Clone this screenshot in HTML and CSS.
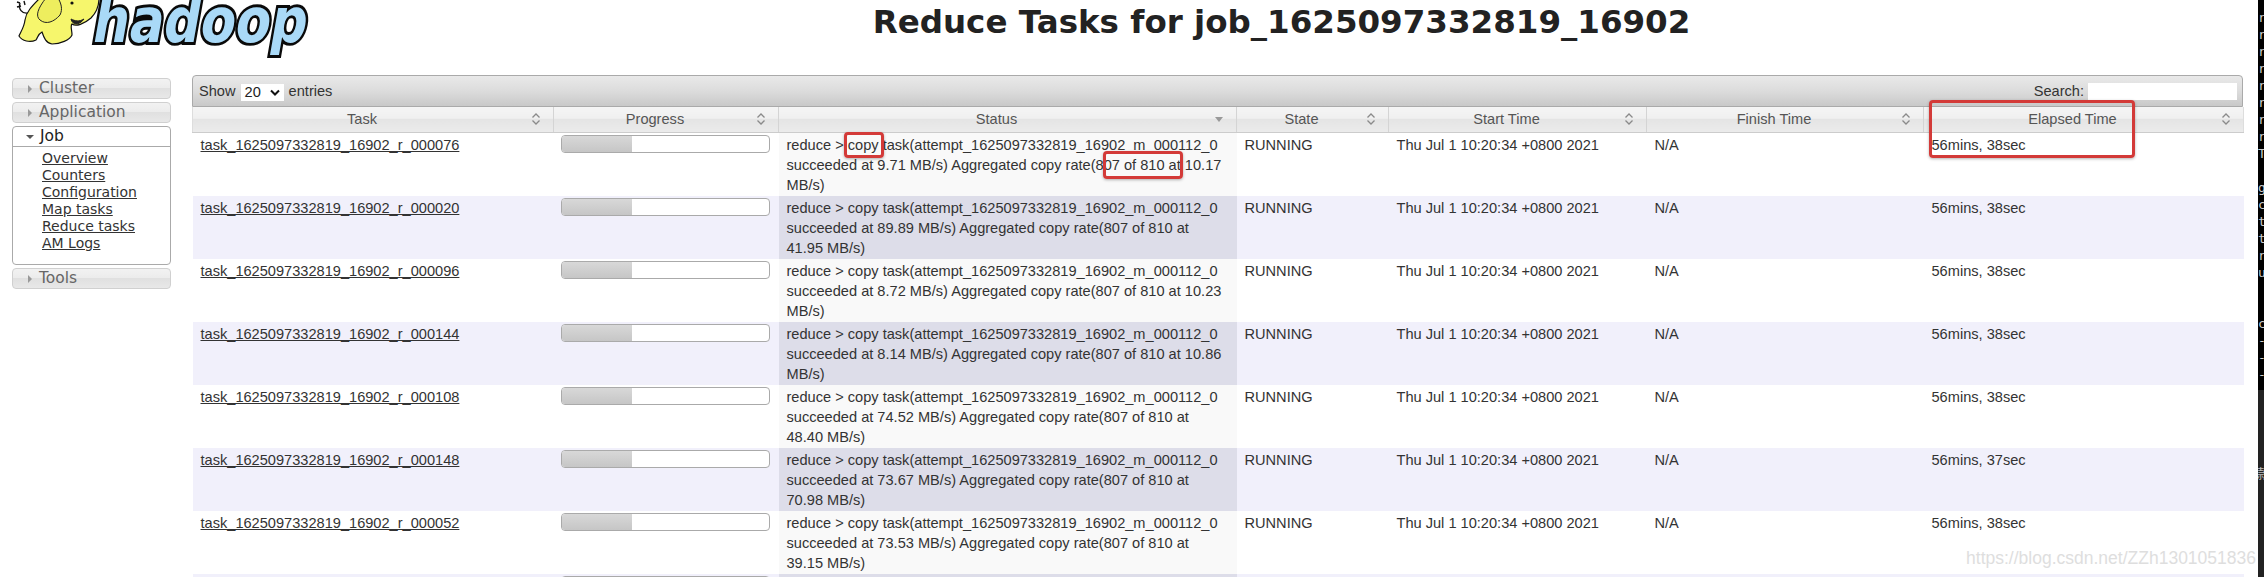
FILE: index.html
```html
<!DOCTYPE html>
<html lang="en">
<head>
<meta charset="utf-8">
<title>Reduce Tasks for job_1625097332819_16902</title>
<link rel="stylesheet" href="styles.css">
</head>
<body>
<svg class="sprites" width="0" height="0" aria-hidden="true">
  <symbol id="sort" viewBox="0 0 10 14"><path d="M1.5 5.5 5 2l3.500 3.500M1.500 8.500 5 12l3.500-3.500" fill="none" stroke="#8a8a8a" stroke-width="1.300"/></symbol>
  <symbol id="sort-desc" viewBox="0 0 10 14"><path d="M1 5h8L5 10z" fill="#999"/></symbol>
</svg>
<div class="page">
  <header class="top">
    <svg class="logo" width="320" height="60" viewBox="0 0 320 60" role="img" aria-label="hadoop logo">
      <path class="trail" d="M28 13C22 14 18 9 20 3M20 3l-3-1M21 6l-4 1M24 1l1 4"/>
      <path class="hide" d="M40-2C32 6 26 12 25 20 24 28 20 33 19 36 22 41 30 43 36 40 38 37 38 34 42 32 44 38 46 43 52 44 60 44 70 40 72 35 72 30 70 26 72 24 76 27 84 24 91 18 97 12 99 6 99-2Z"/>
      <path class="ear" d="M46-2C38 8 35 16 40 20 46 25 54 22 60 15 63 9 61 3 58-2"/>
      <path class="mouth" d="M71 19C72 25 79 26 84 19 79 22 75 21 71 19Z"/>
      <circle class="eye" cx="72" cy="3" r="1.600"/>
      <text class="word" x="90" y="42" textLength="214" lengthAdjust="spacingAndGlyphs" transform="skewX(-10) translate(8 0)">hadoop</text>
    </svg>
    <h1 class="title">Reduce Tasks for job_1625097332819_16902</h1>
  </header>
  <main class="main">
    <nav class="side">
      <div class="acc"><i class="tri"></i>Cluster</div>
      <div class="acc"><i class="tri"></i>Application</div>
      <div class="acc-open">
        <div class="acc-head"><i class="tri-down"></i>Job</div>
        <ul class="links">
          <li><a href="#">Overview</a></li>
          <li><a href="#">Counters</a></li>
          <li><a href="#">Configuration</a></li>
          <li><a href="#">Map tasks</a></li>
          <li><a href="#">Reduce tasks</a></li>
          <li><a href="#">AM Logs</a></li>
        </ul>
      </div>
      <div class="acc"><i class="tri"></i>Tools</div>
    </nav>
    <section class="wrap">
      <div class="toolbar">
        <div class="length">Show <span class="select">20<svg width="10" height="7" viewBox="0 0 10 7"><path d="M1 1.500 5 5.500 9 1.500" fill="none" stroke="#111" stroke-width="2"/></svg></span> entries</div>
        <div class="search">Search:<span class="input"></span></div>
      </div>
      <table class="grid">
        <colgroup>
          <col class="c1"><col class="c2"><col class="c3"><col class="c4"><col class="c5"><col class="c6"><col class="c7">
        </colgroup>
        <thead>
          <tr>
            <th><div class="th"><span>Task</span><svg><use href="#sort"/></svg></div></th>
            <th><div class="th"><span>Progress</span><svg><use href="#sort"/></svg></div></th>
            <th><div class="th"><span>Status</span><svg><use href="#sort-desc"/></svg></div></th>
            <th><div class="th"><span>State</span><svg><use href="#sort"/></svg></div></th>
            <th><div class="th"><span>Start Time</span><svg><use href="#sort"/></svg></div></th>
            <th><div class="th"><span>Finish Time</span><svg><use href="#sort"/></svg></div></th>
            <th><div class="th"><span>Elapsed Time</span><svg><use href="#sort"/></svg></div></th>
          </tr>
        </thead>
        <tbody>
          <tr>
            <td><a href="#">task_1625097332819_16902_r_000076</a></td>
            <td class="pc"><div class="bar"><div class="fill"></div></div></td>
            <td class="st">reduce &gt; copy task(attempt_1625097332819_16902_m_000112_0 succeeded at 9.71 MB/s) Aggregated copy rate(807 of 810 at 10.17 MB/s)</td>
            <td>RUNNING</td><td>Thu Jul 1 10:20:34 +0800 2021</td><td>N/A</td><td>56mins, 38sec</td>
          </tr>
          <tr>
            <td><a href="#">task_1625097332819_16902_r_000020</a></td>
            <td class="pc"><div class="bar"><div class="fill"></div></div></td>
            <td class="st">reduce &gt; copy task(attempt_1625097332819_16902_m_000112_0 succeeded at 89.89 MB/s) Aggregated copy rate(807 of 810 at 41.95 MB/s)</td>
            <td>RUNNING</td><td>Thu Jul 1 10:20:34 +0800 2021</td><td>N/A</td><td>56mins, 38sec</td>
          </tr>
          <tr>
            <td><a href="#">task_1625097332819_16902_r_000096</a></td>
            <td class="pc"><div class="bar"><div class="fill"></div></div></td>
            <td class="st">reduce &gt; copy task(attempt_1625097332819_16902_m_000112_0 succeeded at 8.72 MB/s) Aggregated copy rate(807 of 810 at 10.23 MB/s)</td>
            <td>RUNNING</td><td>Thu Jul 1 10:20:34 +0800 2021</td><td>N/A</td><td>56mins, 38sec</td>
          </tr>
          <tr>
            <td><a href="#">task_1625097332819_16902_r_000144</a></td>
            <td class="pc"><div class="bar"><div class="fill"></div></div></td>
            <td class="st">reduce &gt; copy task(attempt_1625097332819_16902_m_000112_0 succeeded at 8.14 MB/s) Aggregated copy rate(807 of 810 at 10.86 MB/s)</td>
            <td>RUNNING</td><td>Thu Jul 1 10:20:34 +0800 2021</td><td>N/A</td><td>56mins, 38sec</td>
          </tr>
          <tr>
            <td><a href="#">task_1625097332819_16902_r_000108</a></td>
            <td class="pc"><div class="bar"><div class="fill"></div></div></td>
            <td class="st">reduce &gt; copy task(attempt_1625097332819_16902_m_000112_0 succeeded at 74.52 MB/s) Aggregated copy rate(807 of 810 at 48.40 MB/s)</td>
            <td>RUNNING</td><td>Thu Jul 1 10:20:34 +0800 2021</td><td>N/A</td><td>56mins, 38sec</td>
          </tr>
          <tr>
            <td><a href="#">task_1625097332819_16902_r_000148</a></td>
            <td class="pc"><div class="bar"><div class="fill"></div></div></td>
            <td class="st">reduce &gt; copy task(attempt_1625097332819_16902_m_000112_0 succeeded at 73.67 MB/s) Aggregated copy rate(807 of 810 at 70.98 MB/s)</td>
            <td>RUNNING</td><td>Thu Jul 1 10:20:34 +0800 2021</td><td>N/A</td><td>56mins, 37sec</td>
          </tr>
          <tr>
            <td><a href="#">task_1625097332819_16902_r_000052</a></td>
            <td class="pc"><div class="bar"><div class="fill"></div></div></td>
            <td class="st">reduce &gt; copy task(attempt_1625097332819_16902_m_000112_0 succeeded at 73.53 MB/s) Aggregated copy rate(807 of 810 at 39.15 MB/s)</td>
            <td>RUNNING</td><td>Thu Jul 1 10:20:34 +0800 2021</td><td>N/A</td><td>56mins, 38sec</td>
          </tr>
          <tr>
            <td></td>
            <td class="pc"><div class="bar"><div class="fill"></div></div></td>
            <td class="st"></td>
            <td></td><td></td><td></td><td></td>
          </tr>
        </tbody>
      </table>
    </section>
  </main>
</div>
<aside class="strip">
  <div class="term">
    <span>r</span><span>r</span><span>r</span><span>r</span><span>r</span><span>r</span><span>r</span><span>r</span><span>T</span><span>&nbsp;</span><span>g</span><span>c</span><span>t</span><span>t</span><span>r</span><span>u</span><span>&nbsp;</span><span>&nbsp;</span><span>c</span><span>-</span><span>-</span><span>-</span>
  </div>
  <div class="dock"><span class="dock-glyph">款</span></div>
</aside>
<div class="mark mark-copy"></div>
<div class="mark mark-count"></div>
<div class="mark mark-elapsed"></div>
<div class="watermark">https://blog.csdn.net/ZZh1301051836</div>
</body>
</html>
```
FILE: styles.css
```css
* { box-sizing: border-box; }
html, body { margin: 0; height: 577px; overflow: hidden; background: #fff; }
body {
  display: flex;
  position: relative;
  font-family: "Liberation Sans", Arial, sans-serif;
  font-size: 14.6px;
  line-height: 20px;
  color: #333;
}
a { color: #333; }
.sprites { display: block; }

.page { flex: 0 0 2258px; width: 2258px; min-width: 0; }

.top { display: flex; height: 75px; }
.logo { flex: 0 0 192px; width: 320px; overflow: visible; }
.trail { fill: none; stroke: #111; stroke-width: 1.400; }
.hide { fill: #f6f66c; stroke: #111; stroke-width: 1.200; }
.ear { fill: #eeee5e; stroke: #222; stroke-width: 1; }
.mouth { fill: #222; stroke: #222; stroke-width: 1; }
.eye { fill: #111; }
.word {
  font-family: "DejaVu Sans", sans-serif;
  font-weight: 700;
  font-size: 62px;
  fill: #a9d9f7;
  stroke: #0a0a0a;
  stroke-width: 6px;
  paint-order: stroke;
}
.title {
  flex: 1;
  margin: 0;
  padding-right: 15px;
  height: 44px;
  text-align: center;
  font-family: "DejaVu Sans", sans-serif;
  font-size: 32.500px;
  line-height: 44px;
  font-weight: 700;
  color: #222;
}

.main { display: flex; align-items: flex-start; padding-left: 12px; }

.side {
  flex: 0 0 159px;
  margin: 3px 21px 0 0;
  display: flex;
  flex-direction: column;
  gap: 3px;
  font-family: "DejaVu Sans", sans-serif;
}
.acc, .acc-head {
  display: flex;
  align-items: center;
  height: 21px;
  padding-left: 15px;
  font-size: 15.500px;
  line-height: 21px;
  color: #666;
}
.acc {
  border: 1px solid #d0d0d0;
  border-radius: 4px;
  background: linear-gradient(#f2f2f2, #ececec 45%, #e0e0e0 50%, #e8e8e8);
}
.acc-open { border: 1px solid #aaa; border-radius: 4px; background: #fff; height: 139px; }
.acc-head { height: 20px; border-bottom: 1px solid #aaa; color: #222; padding-left: 13px; }
.tri {
  width: 0; height: 0; margin: 0 7px 0 0;
  border-left: 4px solid #999;
  border-top: 4px solid transparent;
  border-bottom: 4px solid transparent;
}
.tri-down {
  width: 0; height: 0; margin: 0 6px 0 0;
  border-top: 4px solid #555;
  border-left: 4px solid transparent;
  border-right: 4px solid transparent;
}
.links { list-style: none; margin: 3px 0 0; padding: 0 0 0 29px; font-size: 14px; line-height: 17px; }

.wrap { flex: 0 0 2051px; width: 2051px; }
.toolbar {
  display: flex;
  justify-content: space-between;
  align-items: center;
  height: 32px;
  padding: 0 5px 0 6px;
  border: 1px solid #aaa;
  border-radius: 4px 4px 0 0;
  background: linear-gradient(#e9e9e9, #dcdcdc 50%, #c9c9c9);
  color: #333;
}
.select {
  display: inline-flex;
  align-items: center;
  justify-content: space-between;
  width: 43px;
  height: 17px;
  padding: 0 4px;
  margin: 0 1px;
  background: #fff;
  color: #222;
  vertical-align: middle;
}
.search { display: flex; align-items: center; gap: 4px; }
.input { width: 149px; height: 17px; background: #fff; }

.grid { width: 2051px; table-layout: fixed; border-collapse: collapse; }
.c1 { width: 361px; }
.c2 { width: 225px; }
.c3 { width: 458px; }
.c4 { width: 152px; }
.c5 { width: 258px; }
.c6 { width: 277px; }
.c7 { width: 320px; }

th {
  height: 25px;
  padding: 0 12px 0 0;
  border-right: 1px solid #d4d4d4;
  border-bottom: 1px solid #ccc;
  background: linear-gradient(#f5f5f5, #efefef 45%, #e4e4e4 50%, #ebebeb);
  font-weight: 400;
  color: #555;
}
th:first-child { border-left: 1px solid #ddd; }
th:last-child { border-right: 1px solid #ddd; }
.th { display: flex; align-items: center; }
.th span { flex: 1; text-align: center; }
.th svg { flex: 0 0 10px; width: 10px; height: 14px; }

tbody tr { height: 63px; }
td { padding: 2px 8px 1px; vertical-align: top; background: #fff; }
tbody tr:nth-child(even) td { background: #f1f0fb; }
td.st { background: #f9f9f9; }
tbody tr:nth-child(even) td.st { background: #dddde9; }
td.pc { padding: 2px 8px 1px 7px; }

.bar {
  width: 209px;
  height: 18px;
  border: 1px solid #aaa;
  border-radius: 4px;
  background: #fff;
  overflow: hidden;
}
.fill { width: 34%; height: 100%; background: linear-gradient(#d8d8d8, #c6c6c6); }

.strip { flex: 0 0 6px; width: 6px; display: flex; flex-direction: column; background: #000; overflow: hidden; }
.term {
  flex: 0 0 390px;
  display: flex;
  flex-direction: column;
  padding-top: 9px;
  font-family: "DejaVu Sans Mono", monospace;
  font-size: 13px;
  line-height: 17px;
  color: #ccc;
}
.dock { flex: 1; background: #222; padding-top: 75px; }
.dock-glyph { display: block; margin-left: -1px; font-family: "Noto Sans CJK SC", sans-serif; font-size: 13px; line-height: 16px; color: #bbb; }

.mark {
  position: absolute;
  border: 3px solid #d33a38;
  border-radius: 4px;
  box-shadow: 0 1px 3px rgba(0, 0, 0, .3);
}
.mark-copy { left: 844px; top: 132px; width: 40px; height: 26px; }
.mark-count { left: 1103px; top: 151px; width: 80px; height: 28px; }
.mark-elapsed { left: 1929px; top: 100px; width: 206px; height: 58px; }

.watermark {
  position: absolute;
  right: 8px;
  top: 547px;
  font-size: 17.500px;
  line-height: 22px;
  color: #dedede;
  white-space: nowrap;
}
```
